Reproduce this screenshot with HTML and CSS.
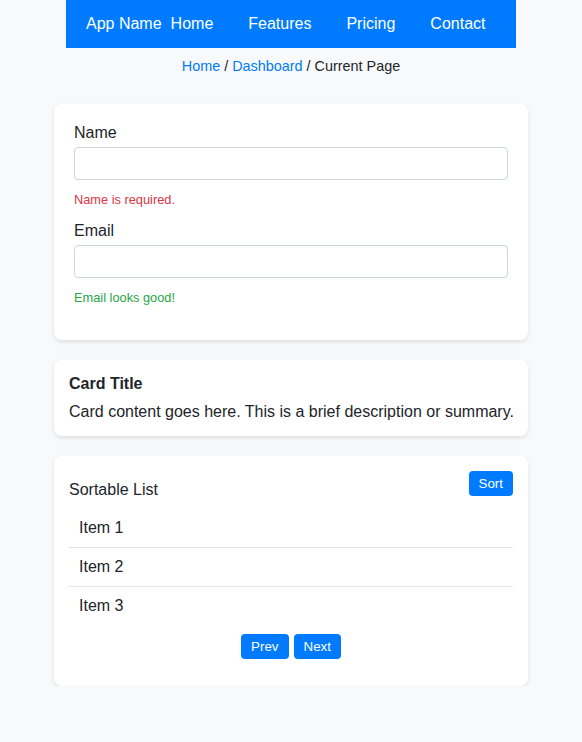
FILE: index.html
```html
<!DOCTYPE html>
<html lang="en">
<head>
<meta charset="utf-8">
<title>App</title>
<link rel="stylesheet" href="styles.css">
</head>
<body>
<nav class="navbar">
  <span class="brand">App Name</span>
  <ul class="nav-links">
    <li><a href="#">Home</a></li>
    <li><a href="#">Features</a></li>
    <li><a href="#">Pricing</a></li>
    <li><a href="#">Contact</a></li>
  </ul>
</nav>
<div class="breadcrumb"><a href="#">Home</a> / <a href="#">Dashboard</a> / <span>Current Page</span></div>
<main class="container">
  <form class="card form-card">
    <div class="form-group">
      <label class="label">Name</label>
      <input class="input" type="text">
      <small class="feedback error">Name is required.</small>
    </div>
    <div class="form-group">
      <label class="label">Email</label>
      <input class="input" type="email">
      <small class="feedback success">Email looks good!</small>
    </div>
  </form>
  <section class="card info-card">
    <h3 class="card-title">Card Title</h3>
    <p class="card-text">Card content goes here. This is a brief description or summary.</p>
  </section>
  <section class="card list-card">
    <div class="list-header">
      <h3 class="list-title">Sortable List</h3>
      <button class="btn">Sort</button>
    </div>
    <ul class="list">
      <li class="list-item">Item 1</li>
      <li class="list-item">Item 2</li>
      <li class="list-item">Item 3</li>
    </ul>
    <div class="pagination">
      <button class="btn">Prev</button>
      <button class="btn">Next</button>
    </div>
  </section>
</main>
</body>
</html>
```
FILE: styles.css
```css
* { box-sizing: border-box; }
body {
  margin: 0;
  background: #f8f9fa;
  font-family: "Liberation Sans", Arial, sans-serif;
  font-size: 16px;
  color: #212529;
}
.navbar {
  width: 450px;
  height: 48px;
  margin: 0 auto;
  background: #007bff;
  display: flex;
  align-items: center;
  padding: 0 20px;
}
.brand {
  color: #fff;
  margin-right: 9px;
}
.nav-links {
  display: flex;
  gap: 35px;
  list-style: none;
  margin: 0;
  padding: 0;
}
.nav-links a {
  color: #fff;
  text-decoration: none;
}
.breadcrumb {
  text-align: center;
  font-size: 14.4px;
  margin: 10px 0 0;
}
.breadcrumb a {
  color: #007bff;
  text-decoration: none;
}
.container {
  width: 474px;
  margin: 30px auto 0;
  display: flex;
  flex-direction: column;
  gap: 20px;
}
.card {
  background: #fff;
  border-radius: 8px;
  box-shadow: 0 2px 4px rgba(0, 0, 0, 0.1);
}
.form-card {
  padding: 20px;
  margin: 0;
}
.form-group {
  margin-bottom: 15px;
}
.label {
  display: block;
  margin-bottom: 5px;
}
.input {
  display: block;
  width: 100%;
  height: 33px;
  border: 1px solid #ced4da;
  border-radius: 4px;
  font-family: inherit;
  font-size: 16px;
  padding: 0 8px;
}
.feedback {
  display: block;
  margin-top: 12px;
  font-size: 12.8px;
}
.error { color: #dc3545; }
.success { color: #28a745; }
.info-card {
  padding: 15px 10px 15px 15px;
}
.card-title {
  margin: 0 0 9.5px;
  font-size: 16px;
  font-weight: bold;
}
.card-text {
  margin: 0;
  white-space: nowrap;
}
.list-card {
  padding: 15px;
}
.list-header {
  display: flex;
  justify-content: space-between;
  align-items: flex-start;
  margin-bottom: 10px;
}
.list-title {
  margin: 10px 0 0;
  font-size: 16px;
  font-weight: normal;
}
.btn {
  background: #007bff;
  color: #fff;
  border: none;
  border-radius: 4px;
  padding: 5px 10px;
  font-family: inherit;
  font-size: 13.33px;
  line-height: 15px;
}
.list {
  list-style: none;
  margin: 0;
  padding: 0;
}
.list-item {
  padding: 10px;
  border-bottom: 1px solid #e5e5e5;
}
.list-item:last-child {
  border-bottom: none;
}
.pagination {
  display: flex;
  justify-content: center;
  gap: 5px;
  margin: 9px 0 12px;
}
```
